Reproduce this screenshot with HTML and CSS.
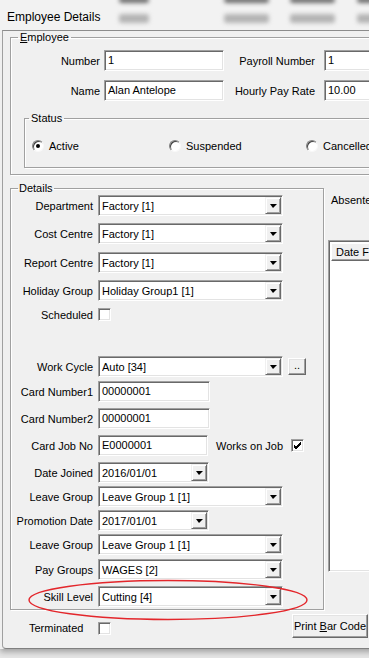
FILE: index.html
```html
<!DOCTYPE html>
<html lang="en">
<head>
    <meta charset="UTF-8">
    <meta name="viewport" content="width=device-width, initial-scale=1.0">
    <title>Employee Details</title>
    <link rel="stylesheet" href="styles.css">
</head>
<body>
    <div class="window">
        <div class="titlebar">
            <span class="title">Employee Details</span>
            <div class="ghost">
                <div class="ghost-row dark">
                    <span class="blob w30"></span>
                    <span class="blob w45 m75"></span>
                    <span class="blob w45 m21"></span>
                    <span class="blob w45 m22"></span>
                </div>
                <div class="ghost-row">
                    <span class="blob w30"></span>
                    <span class="blob w45 m75"></span>
                    <span class="blob w45 m21"></span>
                    <span class="blob w45 m22"></span>
                </div>
            </div>
        </div>

        <div class="client">
            <fieldset class="group employee">
                <legend><u>E</u>mployee</legend>
                <div class="emp-grid">
                    <span class="lbl">Number</span>
                    <div class="edit">1</div>
                    <span class="lbl wide">Payroll Number</span>
                    <div class="edit">1</div>

                    <span class="lbl">Name</span>
                    <div class="edit">Alan Antelope</div>
                    <span class="lbl wide">Hourly Pay Rate</span>
                    <div class="edit">10.00</div>
                </div>

                <fieldset class="group status">
                    <legend>Status</legend>
                    <div class="radios">
                        <span class="radio-item"><span class="radio checked"></span>Active</span>
                        <span class="radio-item"><span class="radio"></span>Suspended</span>
                        <span class="radio-item"><span class="radio"></span>Cancelled</span>
                    </div>
                </fieldset>
            </fieldset>

            <div class="middle">
                <fieldset class="group details">
                    <legend>Details</legend>

                    <div class="row">
                        <span class="lbl">Department</span>
                        <div class="combo"><span class="val">Factory [1]</span><span class="drop"></span></div>
                    </div>
                    <div class="row mt7">
                        <span class="lbl">Cost Centre</span>
                        <div class="combo"><span class="val">Factory [1]</span><span class="drop"></span></div>
                    </div>
                    <div class="row mt8">
                        <span class="lbl">Report Centre</span>
                        <div class="combo"><span class="val">Factory [1]</span><span class="drop"></span></div>
                    </div>
                    <div class="row mt7">
                        <span class="lbl">Holiday Group</span>
                        <div class="combo"><span class="val">Holiday Group1 [1]</span><span class="drop"></span></div>
                    </div>
                    <div class="row mt3">
                        <span class="lbl">Scheduled</span>
                        <span class="check"></span>
                    </div>

                    <div class="row mt31">
                        <span class="lbl">Work Cycle</span>
                        <div class="combo"><span class="val">Auto [34]</span><span class="drop"></span></div>
                        <span class="btn dots">..</span>
                    </div>
                    <div class="row mt4">
                        <span class="lbl">Card Number1</span>
                        <div class="edit card">00000001</div>
                    </div>
                    <div class="row mt6">
                        <span class="lbl">Card Number2</span>
                        <div class="edit card">00000001</div>
                    </div>
                    <div class="row mt6">
                        <span class="lbl">Card Job No</span>
                        <div class="edit job">E0000001</div>
                        <span class="inline-lbl">Works on Job</span>
                        <span class="check checked">
                            <svg width="9" height="9" viewBox="0 0 9 9"><path d="M1 4 L3 6 L8 1 M1 5 L3 7 L8 2 M1 6 L3 8 L8 3" stroke="#000" stroke-width="1" fill="none"/></svg>
                        </span>
                    </div>
                    <div class="row mt6">
                        <span class="lbl">Date Joined</span>
                        <div class="combo date"><span class="val">2016/01/01</span><span class="drop"></span></div>
                    </div>
                    <div class="row mt3">
                        <span class="lbl">Leave Group</span>
                        <div class="combo"><span class="val">Leave Group 1 [1]</span><span class="drop"></span></div>
                    </div>
                    <div class="row mt3">
                        <span class="lbl">Promotion Date</span>
                        <div class="combo date"><span class="val">2017/01/01</span><span class="drop"></span></div>
                    </div>
                    <div class="row mt3">
                        <span class="lbl">Leave Group</span>
                        <div class="combo"><span class="val">Leave Group 1 [1]</span><span class="drop"></span></div>
                    </div>
                    <div class="row mt4">
                        <span class="lbl">Pay Groups</span>
                        <div class="combo"><span class="val">WAGES [2]</span><span class="drop"></span></div>
                    </div>
                    <div class="row mt6">
                        <span class="lbl">Skill Level</span>
                        <div class="combo"><span class="val">Cutting [4]</span><span class="drop"></span></div>
                    </div>
                </fieldset>

                <div class="absentees">
                    <div class="abs-label">Absentees</div>
                    <div class="listview">
                        <div class="lv-header">
                            <span class="lv-col">Date From</span>
                        </div>
                    </div>
                </div>
            </div>

            <div class="footer">
                <span class="term-lbl">Terminated</span>
                <span class="check term"></span>
                <span class="btn print"><span>Print <u>B</u>ar Code</span></span>
            </div>
        </div>

        <!-- red marker drawn over the form -->
        <svg class="marker" width="369" height="658" viewBox="0 0 369 658">
            <ellipse cx="168" cy="600" rx="139" ry="19.5" fill="none" stroke="#e3262b" stroke-width="1.4"/>
        </svg>
    </div>
</body>
</html>
```

FILE: styles.css
```css
* {
    margin: 0;
    padding: 0;
    box-sizing: border-box;
}

html, body {
    overflow: hidden;
}

body {
    background-color: #e6e6e6;
    font-family: 'Liberation Sans', Arial, sans-serif;
    font-size: 11px;
    color: #000;
    width: 369px;
    height: 658px;
}

.window {
    position: relative;
    width: 440px;
    height: 649px;
    background-color: #f0f0f0;
    box-shadow: 0 3px 6px rgba(0,0,0,0.3);
}

/* title bar */
.titlebar {
    display: flex;
    align-items: flex-start;
    height: 30px;
    overflow: hidden;
    background-color: #f2f2f2;
}

.title {
    font-size: 12px;
    line-height: 14px;
    padding: 10px 0 0 7px;
    white-space: nowrap;
}

.ghost {
    display: flex;
    flex-direction: column;
    gap: 11px;
    margin: -3px 0 0 19px;
    filter: blur(2px);
}

.ghost-row {
    display: flex;
}

.blob {
    display: block;
    height: 9px;
    background-color: #b4b4b4;
    border-radius: 3px;
}

.ghost-row.dark .blob {
    height: 6px;
    background-color: #6e6e6e;
}

.w30 { width: 30px; }
.w45 { width: 45px; }
.m75 { margin-left: 75px; }
.m21 { margin-left: 21px; }
.m22 { margin-left: 22px; }

/* client area */
.client {
    height: 619px;
    margin-left: 2px;
    border-top: 1px solid #8c8c8c;
    border-left: 1px solid #a0a0a0;
    border-bottom: 1px solid #808080;
    border-bottom-left-radius: 4px;
}

/* group boxes */
.group {
    border: 1px solid #a0a0a0;
    box-shadow: 1px 1px 0 #fff, inset 1px 1px 0 #fff;
    min-width: 0;
}

.group legend {
    line-height: 13px;
    padding: 0 2px;
    margin-left: 7px;
}

.employee {
    width: 430px;
    margin-left: 7px;
    padding: 6px 0 6px 0;
}

.emp-grid {
    display: grid;
    grid-template-columns: 93px 120px 100px 70px;
    grid-auto-rows: 21px;
    row-gap: 9px;
    align-items: center;
}

.lbl {
    text-align: right;
    padding-right: 4px;
    white-space: nowrap;
}

.emp-grid .wide {
    padding-right: 9px;
}

/* sunken edit */
.edit, .combo, .listview {
    background-color: #fff;
    border: 1px solid;
    border-color: #a0a0a0 #fff #fff #a0a0a0;
    box-shadow: inset 1px 1px 0 #696969, inset -1px -1px 0 #e3e3e3;
}

.edit {
    height: 21px;
    line-height: 19px;
    padding-left: 3px;
    white-space: nowrap;
    overflow: hidden;
}

.status {
    margin: 11px 0 0 13px;
    padding: 14px 0 15px 0;
}

.status legend {
    margin-left: 4px;
}

.radios {
    display: flex;
    height: 13px;
    padding-left: 7px;
}

.radio-item {
    display: flex;
    align-items: center;
    gap: 5px;
    width: 137px;
    flex-shrink: 0;
    white-space: nowrap;
}

.radio {
    position: relative;
    width: 12px;
    height: 12px;
    border-radius: 50%;
    background-color: #fff;
    border: 1px solid;
    border-color: #808080 #f8f8f8 #f8f8f8 #808080;
    box-shadow: inset 1px 1px 0 #404040;
}

.radio.checked::after {
    content: '';
    position: absolute;
    left: 3px;
    top: 3px;
    width: 4px;
    height: 4px;
    border-radius: 50%;
    background-color: #000;
}

/* middle part */
.middle {
    display: flex;
    align-items: flex-start;
    margin-top: 7px;
}

.details {
    width: 314px;
    margin-left: 7px;
    padding: 0 0 2px 0;
    flex-shrink: 0;
}

.details legend {
    padding: 0 1px;
}

.row {
    display: flex;
    align-items: center;
    height: 21px;
}

.row .lbl {
    width: 87px;
    padding-right: 5px;
}

.mt3 { margin-top: 3px; }
.mt4 { margin-top: 4px; }
.mt6 { margin-top: 6px; }
.mt7 { margin-top: 7px; }
.mt8 { margin-top: 8px; }
.mt31 { margin-top: 31px; }

.combo {
    display: flex;
    align-items: center;
    width: 185px;
    height: 21px;
    padding: 2px 2px 2px 3px;
}

.combo.date {
    width: 111px;
}

.combo .val {
    flex: 1;
    white-space: nowrap;
    overflow: hidden;
}

.drop {
    display: flex;
    align-items: center;
    justify-content: center;
    width: 16px;
    height: 17px;
    margin-right: -1px;
    background-color: #f0f0f0;
    border: 1px solid;
    border-color: #f0f0f0 #696969 #696969 #f0f0f0;
    box-shadow: inset 1px 1px 0 #fff, inset -1px -1px 0 #a0a0a0;
}

.drop::after {
    content: '';
    width: 0;
    height: 0;
    border-left: 3px solid transparent;
    border-right: 4px solid transparent;
    border-top: 4px solid #000;
    margin-top: 1px;
}

.edit.card {
    width: 112px;
}

.edit.job {
    width: 110px;
}

.inline-lbl {
    margin-left: 8px;
    white-space: nowrap;
    width: 75px;
}

.check {
    display: flex;
    align-items: center;
    justify-content: center;
    width: 13px;
    height: 13px;
    background-color: #fff;
    border: 1px solid;
    border-color: #a0a0a0 #fff #fff #a0a0a0;
    box-shadow: inset 1px 1px 0 #696969, inset -1px -1px 0 #e3e3e3;
}

/* raised buttons */
.btn {
    display: flex;
    align-items: center;
    justify-content: center;
    background-color: #f0f0f0;
    border: 1px solid;
    border-color: #fff #696969 #696969 #fff;
    box-shadow: inset -1px -1px 0 #a0a0a0, inset 1px 1px 0 #e3e3e3;
    white-space: nowrap;
}

.dots {
    width: 18px;
    height: 17px;
    margin-left: 5px;
    line-height: 11px;
    align-items: flex-end;
    padding-bottom: 3px;
}

/* absentees list */
.absentees {
    margin-left: 4px;
    width: 100px;
    flex-shrink: 0;
}

.abs-label {
    line-height: 13px;
    margin-top: 12px;
    padding-left: 3px;
    white-space: nowrap;
}

.listview {
    margin-top: 33px;
    height: 332px;
    padding: 2px;
}

.lv-header {
    display: flex;
    height: 18px;
}

.lv-col {
    display: flex;
    align-items: center;
    width: 90px;
    padding-left: 4px;
    background-color: #f0f0f0;
    border: 1px solid;
    border-color: #fff #696969 #696969 #fff;
    box-shadow: inset -1px -1px 0 #a0a0a0;
    white-space: nowrap;
}

/* bottom row */
.footer {
    display: flex;
    align-items: flex-start;
    margin-top: 4px;
    padding-left: 26px;
}

.term-lbl {
    width: 69px;
    line-height: 13px;
    margin-top: 8px;
}

.check.term {
    margin-top: 8px;
}

.print {
    width: 76px;
    height: 24px;
    margin-left: 181px;
}

.marker {
    position: absolute;
    left: 0;
    top: 0;
    pointer-events: none;
}
```
